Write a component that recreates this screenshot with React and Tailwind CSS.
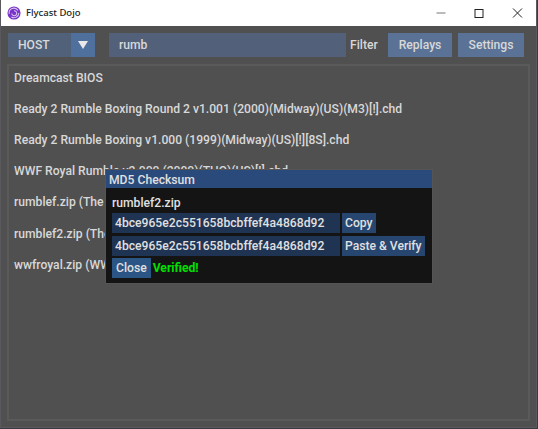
const games = [
  "Dreamcast BIOS",
  "Ready 2 Rumble Boxing Round 2 v1.001 (2000)(Midway)(US)(M3)[!].chd",
  "Ready 2 Rumble Boxing v1.000 (1999)(Midway)(US)[!][8S].chd",
  "WWF Royal Rumble v2.000 (2000)(THQ)(US)[!].chd",
  "rumblef.zip (The King of Route 66)",
  "rumblef2.zip (The Rumble Fish 2)",
  "wwfroyal.zip (WWF Royal Rumble)",
];

function Logo() {
  return (
    <svg width="14" height="14" viewBox="0 0 16 16" fill="none" className="shrink-0">
      <circle cx="8" cy="8" r="7.500" fill="#7a35c8" />
      <path d="M2.500 9a5.500 5.500 0 0 1 10-4M13.500 8a5.500 5.500 0 0 1-8.500 4.500M5.500 8.500a2.800 2.800 0 1 0 2.500-3" stroke="#d9c4f2" strokeWidth="1.200" />
    </svg>
  );
}

function TitleBar() {
  return (
    <div className="flex h-[26px] items-center bg-white pl-[6px]">
      <Logo />
      <span className="ml-[5px] text-[9.500px] text-[#222]" style={{ fontFamily: "'Noto Sans', sans-serif" }}>Flycast Dojo</span>
      <div className="ml-auto flex items-center">
        <svg width="38" height="26" viewBox="0 0 38 26" stroke="#777" fill="none"><path d="M14.500 13h9" /></svg>
        <svg width="38" height="26" viewBox="0 0 38 26" stroke="#222" fill="none"><rect x="15" y="9.500" width="8" height="8" /></svg>
        <svg width="38" height="26" viewBox="0 0 38 26" stroke="#222" fill="none"><path d="M15 8.500l9 9M24 8.500l-9 9" /></svg>
      </div>
    </div>
  );
}

function Toolbar() {
  return (
    <div className="flex h-[24px] items-center pl-[7px] text-[#d8d8d8]">
      <div className="flex h-[24px] w-[87px] bg-[#52617a]">
        <span className="flex-1 pl-[10px] leading-[24px]">HOST</span>
        <span className="flex w-[24px] items-center justify-center bg-[#4f6f9c]">
          <span className="h-0 w-0 border-x-[5px] border-t-[8px] border-x-transparent border-t-[#e8e8e8]" />
        </span>
      </div>
      <div className="ml-[14px] h-[24px] w-[237px] bg-[#52607a] pl-[10px] leading-[24px]">rumb</div>
      <span className="ml-[4px] w-[27px]">Filter</span>
      <div className="ml-[11px] h-[24px] w-[64px] bg-[#5a7296] text-center leading-[24px]">Replays</div>
      <div className="ml-[6px] h-[24px] w-[66px] bg-[#5a7296] text-center leading-[24px]">Settings</div>
    </div>
  );
}

function Checksum() {
  return (
    <div className="absolute left-[105px] top-[170px] w-[326px] bg-[#141414] text-[#e0e0e0] outline outline-[#555]">
      <div className="h-[18px] bg-[#2a4a7c] pl-[3px] leading-[20px]">MD5 Checksum</div>
      <div className="flex flex-col gap-[2.500px] px-[6px] pb-[5px] pt-[6px]">
        <div className="h-[16.500px] leading-[19px]">rumblef2.zip</div>
        <div className="flex gap-[2px]">
          <div className="h-[20px] w-[228px] bg-[#1f3352] pl-[3px] leading-[20px]">4bce965e2c551658bcbffef4a4868d92</div>
          <div className="h-[20px] whitespace-nowrap bg-[#26456f] px-[3px] leading-[20px]">Copy</div>
        </div>
        <div className="flex gap-[2px]">
          <div className="h-[20px] w-[228px] bg-[#1f3352] pl-[3px] leading-[20px]">4bce965e2c551658bcbffef4a4868d92</div>
          <div className="h-[20px] whitespace-nowrap bg-[#26456f] px-[3px] leading-[20px]">Paste &amp; Verify</div>
        </div>
        <div className="flex h-[20px] gap-[2px]">
          <div className="bg-[#2a5585] px-[4px] leading-[21px]">Close</div>
          <div className="font-bold leading-[21px] text-[#00e000]">Verified!</div>
        </div>
      </div>
    </div>
  );
}

export default function App() {
  return (
    <div className="h-[429px] w-[538px] bg-[#3a3a42]">
      <div className="relative h-[428px] w-[537px] overflow-hidden border-x border-b border-[#5a5a5e] bg-[#505050] text-[12.150px] font-medium" style={{ fontFamily: "Roboto, sans-serif" }}>
        <TitleBar />
        <div className="pt-[7px]"><Toolbar /></div>
        <div className="mx-[6px] mt-[7px] h-[357px] border-2 border-[#5a5a5a] pl-[5px] pt-[2.600px] text-[#d8d8d8]">
          {games.map((g) => (
            <div key={g} className="h-[31.200px] leading-[19px]">{g}</div>
          ))}
        </div>
        <Checksum />
      </div>
    </div>
  );
}
